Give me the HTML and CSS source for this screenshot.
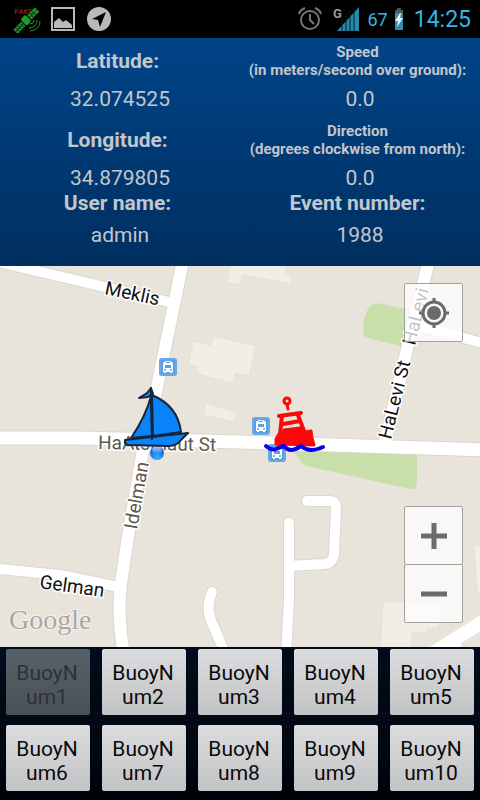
FILE: index.html
```html
<!DOCTYPE html>
<html lang="en">
<head>
<meta charset="utf-8">
<meta name="viewport" content="width=device-width, initial-scale=1">
<title>Sailing tracker</title>
<link rel="stylesheet" href="styles.css">
</head>
<body>
<header class="status">
  <div class="status-group">
    <svg class="icon-sat" width="28" height="28" viewBox="0 0 28 28" aria-hidden="true">
      <g transform="rotate(-46 13 16)" fill="#1f9a2c">
        <rect x="-2" y="13" width="11" height="6"/>
        <rect x="10" y="11" width="7" height="9" rx="2"/>
        <rect x="18" y="13" width="11" height="6"/>
        <path d="M1 13v6M4 13v6M7 13v6M21 13v6M24 13v6M-2 16h11M18 16h11" stroke="#063f0c" stroke-width="1"/>
      </g>
      <path d="M17 19q4 0 4-4M16 23q8 0 8-8M17 26q10-1 10-10" fill="none" stroke="#2c8f38" stroke-width="1"/>
      <text x="1" y="9" class="fake">FAKE</text>
    </svg>
    <svg width="24" height="24" viewBox="0 0 24 24" aria-hidden="true">
      <rect x="1" y="1" width="22" height="22" fill="none" stroke="#b9b9b9" stroke-width="2"/>
      <path d="M3 21v-6l5-4 4 4 3-2 6 5v3z" fill="#b9b9b9"/>
    </svg>
    <svg width="24" height="24" viewBox="0 0 24 24" aria-hidden="true">
      <circle cx="12" cy="12" r="12" fill="#b9b9b9"/>
      <path d="M19 5 5 12l6 1 2 7z" fill="#000"/>
    </svg>
  </div>
  <div class="status-group status-right">
    <svg class="icon-alarm" width="24" height="24" viewBox="0 0 24 24" aria-hidden="true" fill="none" stroke="#777" stroke-width="2">
      <circle cx="12" cy="13" r="9"/>
      <path d="M12 7v6l4 4M1 7q1-4 6-6M23 7q-1-4-6-6" stroke-width="2"/>
    </svg>
    <svg class="icon-signal" width="26" height="26" viewBox="0 0 26 26" aria-hidden="true">
      <path d="M26 1v24H4z" fill="#2b89ac"/>
      <path d="M9 12v13M13 8v17M17 4v21M21 2v23" stroke="#02202b" stroke-width="1"/>
      <text x="0" y="12" class="network">G</text>
    </svg>
    <span class="percent">67</span>
    <svg class="icon-battery" width="10" height="24" viewBox="0 0 10 24" aria-hidden="true">
      <path d="M3 1h4v2h2v4H1V3h2z" fill="#555"/>
      <path d="M1 6h8v17H1z" fill="#2d8db2"/>
      <path d="M6 6 1 14h3l-1 6 6-9H6l1-5z" fill="#e8f6fb"/>
    </svg>
    <time class="clock">14:25</time>
  </div>
</header>

<main class="screen">
  <dl class="telemetry">
    <div class="reading">
      <dt>Latitude:</dt>
      <dd>32.074525</dd>
    </div>
    <div class="reading">
      <dt class="long">Speed<br>(in meters/second over ground):</dt>
      <dd>0.0</dd>
    </div>
    <div class="reading">
      <dt>Longitude:</dt>
      <dd>34.879805</dd>
    </div>
    <div class="reading">
      <dt class="long">Direction<br>(degrees clockwise from north):</dt>
      <dd>0.0</dd>
    </div>
    <div class="reading compact">
      <dt>User name:</dt>
      <dd>admin</dd>
    </div>
    <div class="reading compact">
      <dt>Event number:</dt>
      <dd>1988</dd>
    </div>
  </dl>

  <section class="map" aria-label="Map">
    <svg class="map-canvas" viewBox="0 266 480 381" preserveAspectRatio="xMidYMid slice">
      <defs>
        <radialGradient id="dot" cx="50%" cy="85%" r="80%">
          <stop offset="0" stop-color="#38b4ff"/>
          <stop offset="1" stop-color="#0b50d0"/>
        </radialGradient>
        <linearGradient id="gloss" x1="0" y1="0" x2="0" y2="1">
          <stop offset="0" stop-color="#fff" stop-opacity=".75"/>
          <stop offset="1" stop-color="#fff" stop-opacity="0"/>
        </linearGradient>
        <g id="bus">
          <rect width="18" height="18" rx="3" fill="#5a9fe0"/>
          <rect x="1" y="1" width="16" height="16" rx="2" fill="none" stroke="#79b3ea"/>
          <path d="M4 14V6q0-3 5-3t5 3v8h-1v1h-2v-1H7v1H5v-1z" fill="#fff"/>
          <path d="M6 7h6v3H6zM7 4h4v1H7z" fill="#5a9fe0"/>
          <circle cx="6" cy="12" r="1" fill="#5a9fe0"/><circle cx="12" cy="12" r="1" fill="#5a9fe0"/>
        </g>
        <g id="roads">
          <path class="road-wide" d="M-10 438H80L240 442L490 450"/>
          <path class="road" d="M184 256L157 387L143 450L129 530L121 583Q117 615 124 655"/>
          <path class="road" d="M430 256L408 345L384 446"/>
          <path class="road-thin" d="M-10 260L169 302"/>
          <path class="road-thin" d="M412 324L490 345"/>
          <path class="road-thin" d="M-10 568L60 575L119 587"/>
          <path class="road-thin" d="M212 592Q205 608 212 623T226 656"/>
          <path class="road-thin" d="M289 523L289 600L286 656M307 501H329Q336 501 336 508L334 554Q333 563 324 564L289 566"/>
        </g>
      </defs>
      <rect y="266" width="480" height="381" fill="#e8e4dc"/>
      <g class="building">
        <path d="M232 260L227 282L240 285L243 275L291 284L292 276L285 274L287 260z"/>
        <path d="M193 341L211 345L213 336L256 346L249 376L235 373L233 383L197 374V367L189 364z"/>
        <path d="M206 403L237 412L235 422L203 415z"/>
        <path d="M383 602H441V623H439V628H427V633H412L411 650H380z"/>
        <path d="M474 546H484V600L477 590z"/>
      </g>
      <g fill="#c9dfa9">
        <path d="M371 305Q375 302 382 304L414 311L404 347L368 338Q362 336 363 329Q364 312 371 305z"/>
        <path d="M292 446L417 449V483Q417 490 410 489L307 466Q298 463 292 446z"/>
      </g>
      <use href="#roads" class="casing"/>
      <path d="M425 650L484 613V629L461 643V650z" fill="#fff"/>
      <use href="#roads" class="surface"/>

      <g class="street">
        <text transform="translate(104 294) rotate(12)">Meklis</text>
        <text transform="translate(39 588) rotate(8)">Gelman</text>
        <text transform="translate(391 440) rotate(-76)">HaLevi St</text>
        <text transform="translate(415 346) rotate(-76)">HaLevi</text>
        <text class="soft" transform="translate(98 449) rotate(1)">HaAtsmaut St</text>
        <text class="soft" transform="translate(137 530) rotate(-80)">Idelman</text>
      </g>
      <text class="brand" x="9" y="629">Google</text>

      <use href="#bus" x="159" y="358"/>
      <use href="#bus" x="252" y="417"/>
      <use href="#bus" x="268" y="444"/>

      <circle cx="157" cy="453" r="7" fill="url(#dot)"/>
      <ellipse cx="157" cy="450" rx="5" ry="4" fill="url(#gloss)"/>

      <g fill="#0a84f8" stroke="#14263a" stroke-width="2" stroke-linejoin="round" stroke-linecap="round">
        <path d="M151 388L147 393L139 398L148 397L153 394z"/>
        <path d="M151 396Q146 416 131 438L152 436z"/>
        <path d="M152 395Q178 406 181 432L153 436z"/>
        <path d="M125 440L188 433L178 443Q174 446 168 446L128 445Q124 444 125 440z"/>
        <path d="M151 388L152 439" fill="none"/>
      </g>

      <g fill="none" stroke="#fb0808" stroke-width="3" stroke-linejoin="round" stroke-linecap="round">
        <circle cx="287" cy="401" r="3"/>
        <path d="M287 404L288 409"/>
        <path d="M279 416L301 413M282 416L280 434M298 415L304 431M283 424L300 421" stroke-width="4"/>
        <path d="M276 439L279 434L282 435L284 430L300 428L306 432L311 431L312 438L314 445L276 444z" fill="#fb0808"/>
      </g>
      <path d="M266 446Q272 451 276 449T284 446Q287 450 291 450T301 446Q306 450 311 450T323 447" fill="none" stroke="#0804e6" stroke-width="4" stroke-linecap="round"/>
    </svg>

    <button class="map-button locate" type="button" aria-label="My location">
      <svg width="30" height="30" viewBox="0 0 30 30" aria-hidden="true">
        <circle cx="15" cy="15" r="11" fill="none" stroke="#6a6a6a" stroke-width="3"/>
        <circle cx="15" cy="15" r="7" fill="#6a6a6a"/>
        <path d="M15 0v4M15 26v4M0 15h4M26 15h4" stroke="#6a6a6a" stroke-width="3"/>
      </svg>
    </button>
    <div class="zoom">
      <button class="map-button" type="button" aria-label="Zoom in">
        <svg width="26" height="26" viewBox="0 0 26 26" aria-hidden="true"><path d="M13 0v26M0 13h26" stroke="#6c6c6c" stroke-width="5"/></svg>
      </button>
      <button class="map-button" type="button" aria-label="Zoom out">
        <svg width="26" height="26" viewBox="0 0 26 26" aria-hidden="true"><path d="M0 13h26" stroke="#6c6c6c" stroke-width="5"/></svg>
      </button>
    </div>
  </section>

  <nav class="buoys" aria-label="Buoys">
    <button type="button" disabled>BuoyNum1</button>
    <button type="button">BuoyNum2</button>
    <button type="button">BuoyNum3</button>
    <button type="button">BuoyNum4</button>
    <button type="button">BuoyNum5</button>
    <button type="button">BuoyNum6</button>
    <button type="button">BuoyNum7</button>
    <button type="button">BuoyNum8</button>
    <button type="button">BuoyNum9</button>
    <button type="button">BuoyNum10</button>
  </nav>
</main>
</body>
</html>
```
FILE: styles.css
```css
* {
  box-sizing: border-box;
}

body {
  margin: 0;
  min-height: 100vh;
  display: flex;
  flex-direction: column;
  background: #000;
  color: #c3c6ca;
  font-family: Roboto, "Liberation Sans", sans-serif;
}

svg {
  display: block;
}

/* Status bar */
.status {
  display: flex;
  justify-content: space-between;
  align-items: center;
  height: 38px;
  padding: 0 9px 0 13px;
}

.status-group {
  display: flex;
  align-items: center;
  gap: 12px;
}

.status-group > .icon-sat {
  margin-right: -2px;
}

.status-right {
  gap: 8px;
  color: #33b5e5;
}

.icon-alarm {
  margin-right: 3px;
}

.fake {
  fill: #8c1a10;
  font: bold 8px "Liberation Mono", monospace;
}

.network {
  fill: #999;
  font: bold 13px Roboto, sans-serif;
}

.percent {
  font-size: 18px;
}

.icon-battery {
  margin-left: -2px;
}

.clock {
  margin-left: 2px;
  font-size: 23px;
}

/* Readings */
.screen {
  flex: 1;
  display: flex;
  flex-direction: column;
}

.telemetry {
  display: grid;
  grid-template-columns: 1fr 1fr;
  margin: 0;
  padding: 5px 0 18px;
  background: linear-gradient(#004488, #002f60);
  text-align: center;
}

.reading {
  padding-bottom: 10px;
}

.reading:nth-child(3),
.reading:nth-child(4),
.reading.compact {
  padding-bottom: 0;
}

.reading dt {
  display: grid;
  place-content: center;
  height: 36px;
  margin-bottom: 7px;
  padding-right: 5px;
  font-size: 21px;
  font-weight: 700;
  line-height: 24px;
}

.reading dt.long {
  display: block;
  font-size: 15px;
  line-height: 18px;
}

.reading.compact dt {
  height: 24px;
}

.reading dd {
  margin: 0;
  font-size: 21px;
  line-height: 26px;
}

/* Map */
.map {
  position: relative;
  flex: 1;
  min-height: 300px;
  overflow: hidden;
  background: #e8e4dc;
}

.map-canvas {
  position: absolute;
  width: 100%;
  height: 100%;
}

.building {
  fill: #f1eee8;
  stroke: #e5e0d8;
}

#roads {
  fill: none;
  stroke-linecap: round;
  stroke-linejoin: round;
}

.casing {
  --edge: 1px;
  stroke: #dcd7ce;
}

.surface {
  --edge: 0px;
  stroke: #fff;
}

.road-wide {
  stroke-width: calc(13px + var(--edge) * 2);
}

.road {
  stroke-width: calc(12px + var(--edge) * 2);
}

.road-thin {
  stroke-width: calc(10px + var(--edge) * 2);
}

.street {
  fill: #111;
  stroke: #fff;
  stroke-width: 3px;
  stroke-linejoin: round;
  paint-order: stroke;
  font-size: 19px;
}

.street .soft {
  fill: #5d5852;
}

.brand {
  fill: #aaa7a2;
  stroke: #f4f2ee;
  stroke-width: 2px;
  paint-order: stroke;
  font-family: "Liberation Serif", serif;
  font-size: 28px;
}

.map-button {
  display: grid;
  place-items: center;
  width: 59px;
  height: 59px;
  padding: 0;
  border: 1px solid #a3a19d;
  border-radius: 2px;
  background: rgba(255, 255, 255, 0.75);
}

.locate {
  position: absolute;
  top: 17px;
  right: 17px;
}

.zoom {
  position: absolute;
  right: 17px;
  bottom: 24px;
}

.zoom .map-button + .map-button {
  margin-top: -1px;
}

/* Buoy selection */
.buoys {
  display: grid;
  grid-template-columns: repeat(5, 1fr);
  gap: 10px 12px;
  padding: 2px 6px 9px;
  background: linear-gradient(#000d1c, #00040a);
}

.buoys button {
  height: 66px;
  padding: 6px 11px 0 9px;
  border: 0;
  border-radius: 2px;
  background: linear-gradient(#dcdcde, #c2c3c5);
  color: #0a0a0a;
  font: 21px/24px Roboto, "Liberation Sans", sans-serif;
  word-break: break-all;
}

.buoys button:disabled {
  background: linear-gradient(#58616a, #4a5056);
  color: #2c3238;
}
```
